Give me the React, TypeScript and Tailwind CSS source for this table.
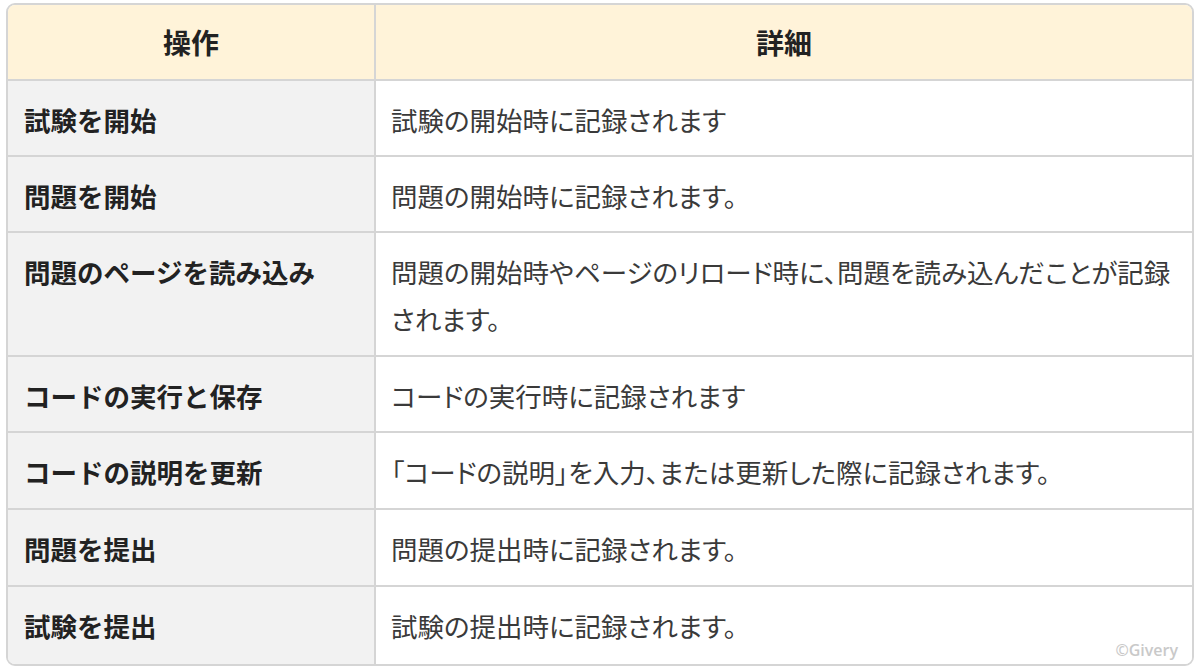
import React from "react";

const rows: { op: string; detail: React.ReactNode; h: string }[] = [
  { op: "試験を開始", detail: "試験の開始時に記録されます", h: "h-[76px]" },
  { op: "問題を開始", detail: "問題の開始時に記録されます。", h: "h-[76px]" },
  {
    op: "問題のページを読み込み",
    detail: (
      <>
        問題の開始時やページのリロード時に、問題を読み込んだことが記録
        <br />
        されます。
      </>
    ),
    h: "h-[124px]",
  },
  { op: "コードの実行と保存", detail: "コードの実行時に記録されます", h: "h-[76px]" },
  { op: "コードの説明を更新", detail: "「コードの説明」を入力、または更新した際に記録されます。", h: "h-[77px]" },
  { op: "問題を提出", detail: "問題の提出時に記録されます。", h: "h-[77px]" },
  { op: "試験を提出", detail: "試験の提出時に記録されます。", h: "h-[77px]" },
];

export default function App() {
  return (
    <div
      className="w-[1200px] h-[671px] bg-white pt-[3px] pl-[6px]"
      style={{ fontFamily: "'Noto Sans CJK JP', 'Noto Sans', sans-serif" }}
    >
      <div className="relative w-[1188px] border-2 border-[#d5d5d5] rounded-[9px] overflow-hidden">
        <div className="grid grid-cols-[368px_1fr]">
          <div className="h-[76px] bg-[#fff3d9] border-r-2 border-b-2 border-[#d5d5d5] flex items-center justify-center text-[28px] font-semibold text-[#222]">
            操作
          </div>
          <div className="h-[76px] bg-[#fff3d9] border-b-2 border-[#d5d5d5] flex items-center justify-center text-[28px] font-semibold text-[#222]">
            詳細
          </div>
          {rows.map((r, i) => {
            const last = i === rows.length - 1;
            return (
              <React.Fragment key={i}>
                <div
                  className={`bg-[#f2f2f2] border-r-2 border-[#d5d5d5] pl-[16px] pr-[8px] pt-[15px] pb-[12px] text-[26.5px] leading-[47px] font-semibold text-[#222] whitespace-nowrap ${
                    last ? "" : "border-b-2"
                  } ${r.h}`}
                >
                  {r.op}
                </div>
                <div
                  className={`bg-white border-[#d5d5d5] pl-[15px] pr-[4px] pt-[15px] pb-[12px] text-[26.5px] leading-[47px] text-[#3a3a3a] whitespace-nowrap [font-feature-settings:'palt'] ${
                    last ? "" : "border-b-2"
                  } ${r.h}`}
                >
                  {r.detail}
                </div>
              </React.Fragment>
            );
          })}
        </div>
        <div
          className="absolute right-[14px] bottom-[6px] text-[16px] font-semibold text-[#c9c9c9] leading-none"
          style={{ fontFamily: "'Open Sans', 'Noto Sans', sans-serif" }}
        >
          ©Givery
        </div>
      </div>
    </div>
  );
}
